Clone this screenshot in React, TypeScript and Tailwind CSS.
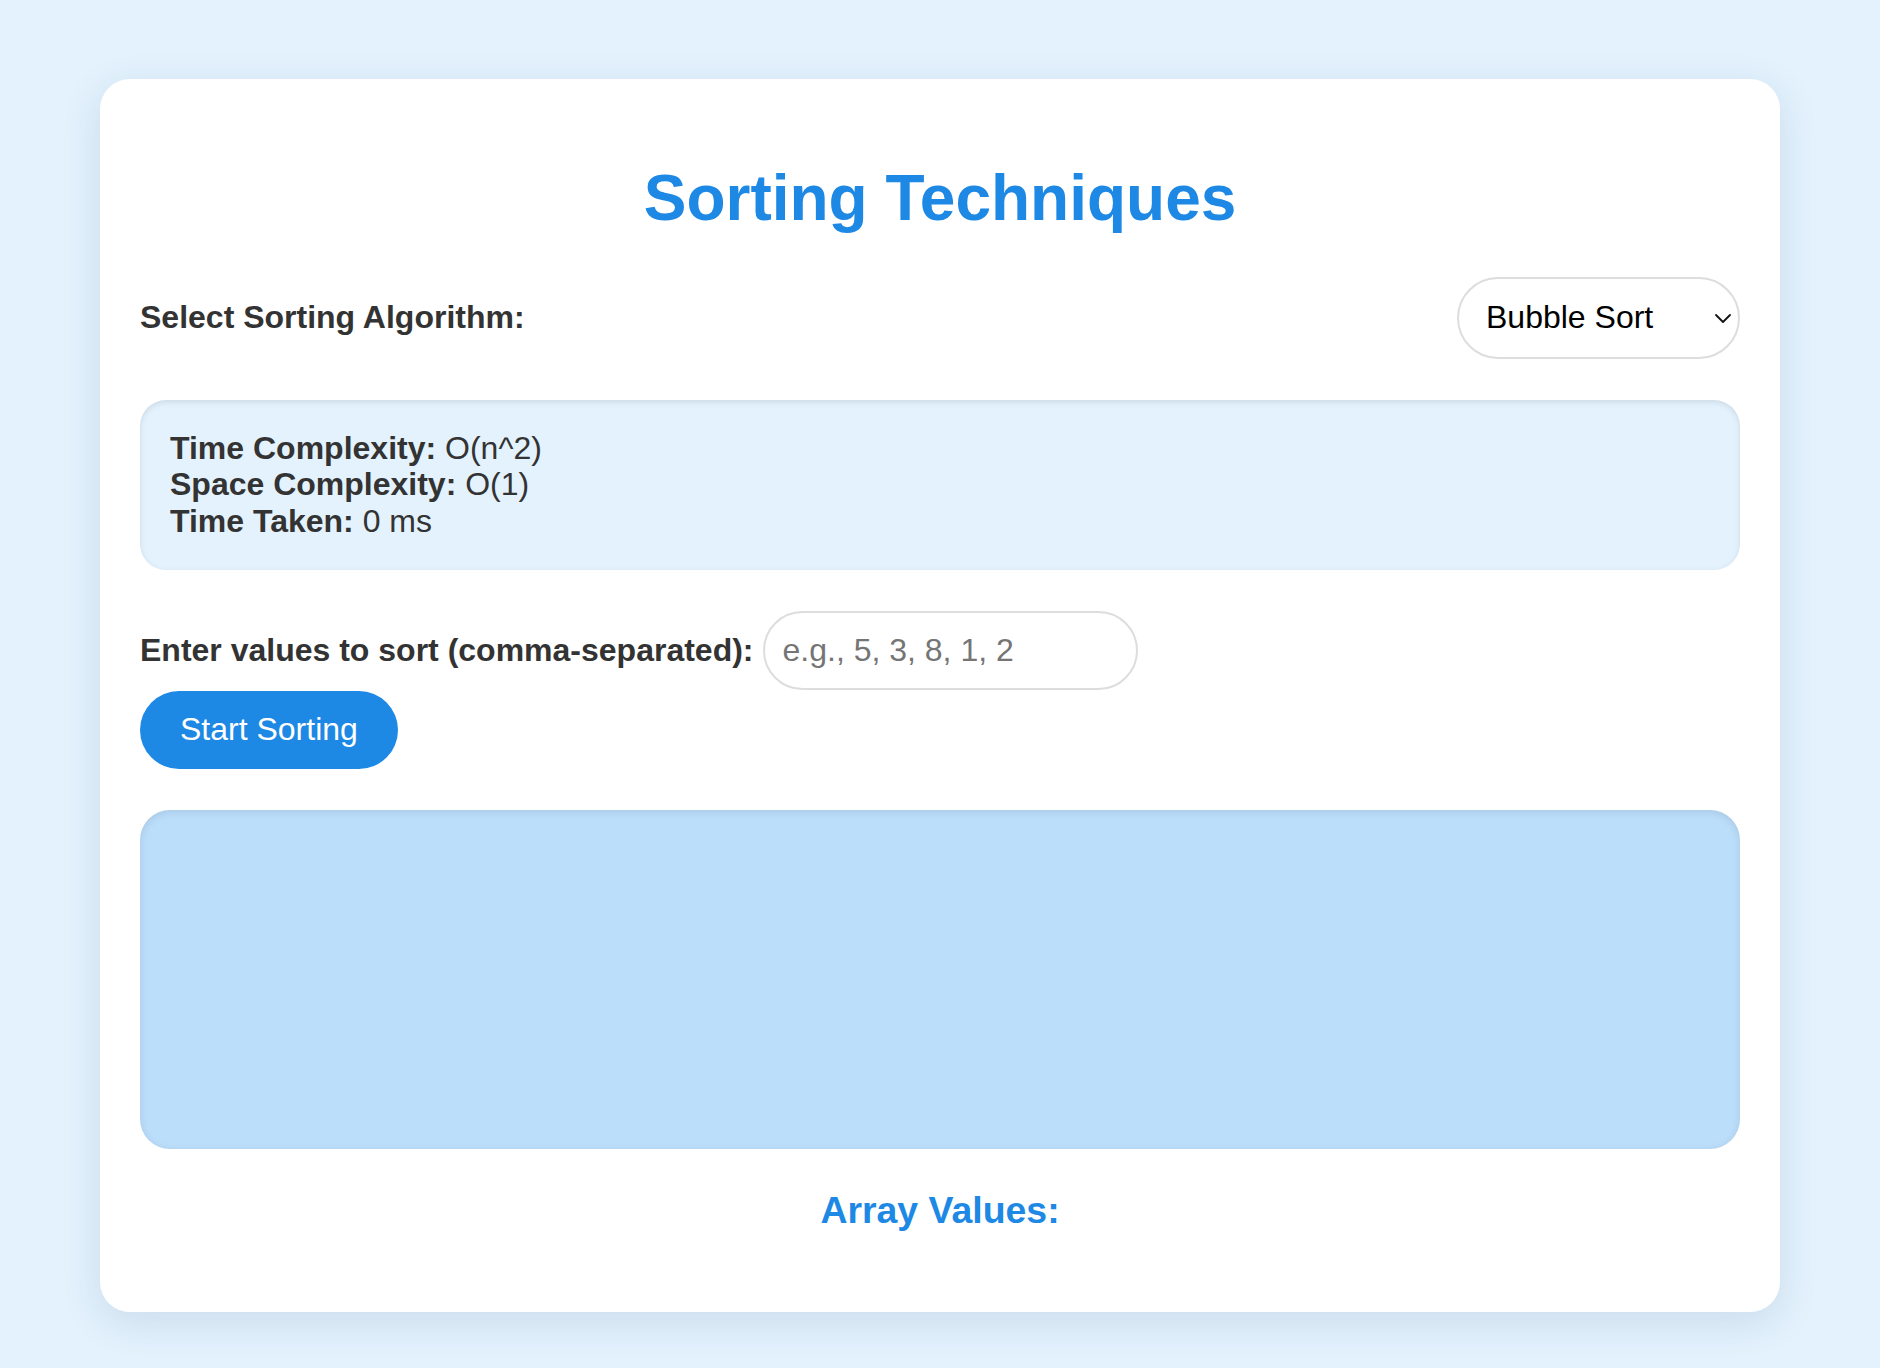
import React from "react";

export default function App() {
  return (
    <div
      className="min-h-screen w-full bg-[#e3f2fd] px-[100px] pt-[79px] pb-[57px]"
      style={{ fontFamily: '"Liberation Sans", Arial, Helvetica, sans-serif' }}
    >
      <div className="rounded-[30px] bg-white p-[40px] shadow-[0_10px_40px_rgba(30,60,100,0.12)]">
        <h1 className="mt-[43px] mb-[41px] text-center text-[64px] font-bold leading-[1.149] text-[#1e88e5]">
          Sorting Techniques
        </h1>

        <div className="flex items-center justify-between">
          <label className="text-[32px] font-bold leading-[1.149] text-[#333333]">
            Select Sorting Algorithm:
          </label>
          <div className="relative">
            <select
              defaultValue="bubble"
              className="h-[82px] w-[283px] appearance-none rounded-full border-2 border-[#dddddd] bg-white pl-[27px] pr-[50px] text-[32px] leading-[1.149] text-black outline-none"
              style={{ fontFamily: '"Liberation Sans", Arial, Helvetica, sans-serif' }}
            >
              <option value="bubble">Bubble Sort</option>
              <option value="selection">Selection Sort</option>
              <option value="insertion">Insertion Sort</option>
              <option value="merge">Merge Sort</option>
              <option value="quick">Quick Sort</option>
            </select>
            <svg
              className="pointer-events-none absolute right-[8px] top-[36px]"
              width="18"
              height="11"
              viewBox="0 0 18 11"
              fill="none"
            >
              <path d="M2 2 L9 9 L16 2" stroke="#111" strokeWidth="1.8" strokeLinecap="round" strokeLinejoin="round" />
            </svg>
          </div>
        </div>

        <div className="mt-[41px] rounded-[26px] bg-[#e3f2fd] px-[30px] py-[30px] text-[32px] leading-[1.149] text-[#333333] shadow-[inset_0_2px_6px_rgba(0,0,0,0.1)]">
          <div>
            <span className="font-bold">Time Complexity:</span> O(n^2)
          </div>
          <div>
            <span className="font-bold">Space Complexity:</span> O(1)
          </div>
          <div>
            <span className="font-bold">Time Taken:</span> 0 ms
          </div>
        </div>

        <div className="mt-[41px] flex flex-col items-start">
          <div className="flex items-center gap-[9px]">
            <label className="text-[32px] font-bold leading-[1.149] text-[#333333]">
              Enter values to sort (comma-separated):
            </label>
            <input
              type="text"
              placeholder="e.g., 5, 3, 8, 1, 2"
              className="h-[79px] w-[375px] rounded-full border-2 border-[#dddddd] bg-white px-[18px] text-[32px] text-black outline-none placeholder:text-[#757575]"
              style={{ fontFamily: '"Liberation Sans", Arial, Helvetica, sans-serif' }}
            />
          </div>
          <button
            className="mt-[1px] h-[78px] rounded-full bg-[#1e88e5] px-[40px] text-[32px] leading-[1.149] text-white"
            style={{ fontFamily: '"Liberation Sans", Arial, Helvetica, sans-serif' }}
          >
            Start Sorting
          </button>
        </div>

        <div className="mt-[41px] h-[339px] rounded-[30px] bg-[#bbdefb] shadow-[inset_0_2px_8px_rgba(0,0,0,0.1)]" />

        <h3 className="mt-[40px] mb-[40px] text-center text-[37.44px] font-bold leading-[1.149] text-[#1e88e5]">
          Array Values:
        </h3>
      </div>
    </div>
  );
}
